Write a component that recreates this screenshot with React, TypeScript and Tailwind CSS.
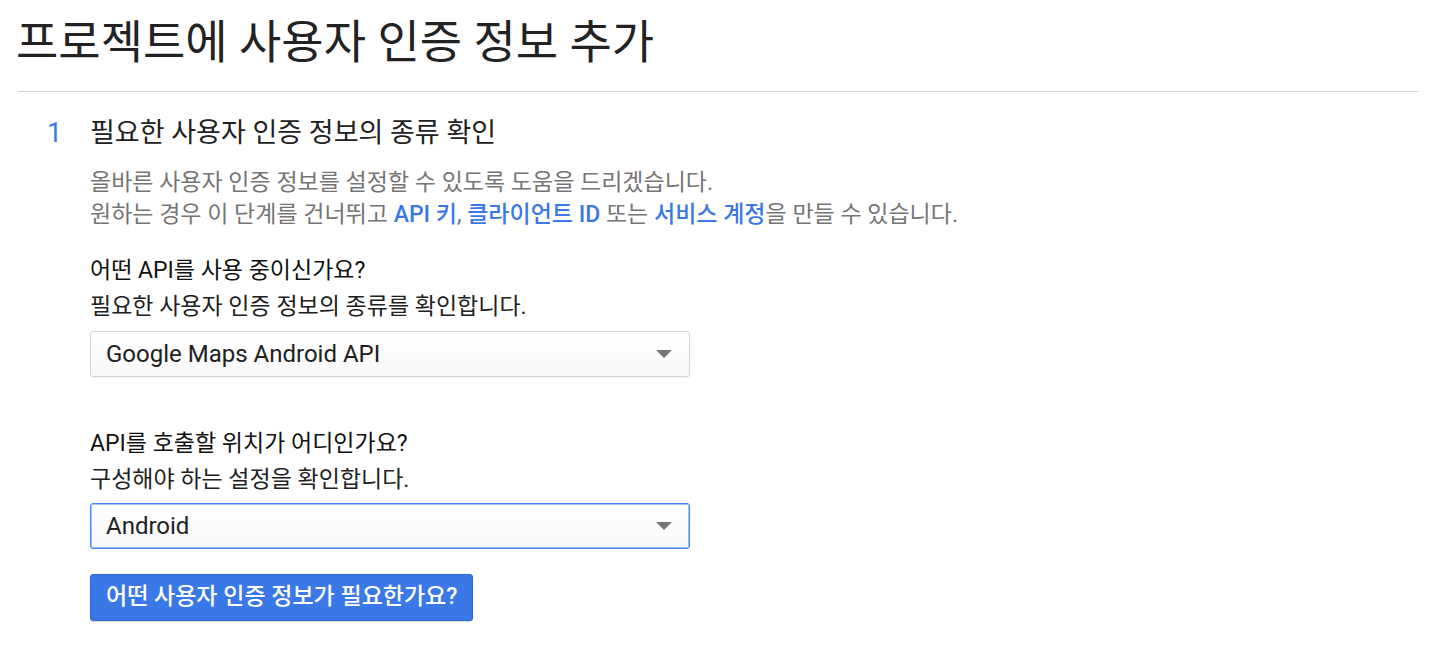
import React from "react";

const font = { fontFamily: 'Roboto, "Noto Sans CJK KR", sans-serif' };

function Select({ value, focused }: { value: string; focused?: boolean }) {
  return (
    <div
      className={
        "flex h-[46px] w-[600px] items-center justify-between rounded-[3px] border bg-gradient-to-b from-white to-[#f8f8f8] pl-[15px] pr-[17px] text-[24px] text-[#212121] " +
        (focused ? "border-[#4285f4] shadow-[0_0_0_1px_rgba(66,133,244,0.5)_inset]" : "border-[#d4d4d4] shadow-[0_1px_1px_rgba(0,0,0,0.06)]")
      }
    >
      <span>{value}</span>
      <svg width="16" height="8" viewBox="0 0 16 8">
        <path d="M0 0h16L8 8z" fill="#757575" />
      </svg>
    </div>
  );
}

export default function App() {
  return (
    <div className="min-h-screen w-full bg-white text-[#212121]" style={font}>
      <h1 className="pl-[16px] pt-[14px] text-[46px] leading-[56px] font-normal text-[#222]">
        프로젝트에 사용자 인증 정보 추가
      </h1>

      <div className="ml-[18px] mr-[20px] mt-[21px] border-t border-[#d4d4d4]" />

      <div className="mt-[25px] flex">
        <div className="w-[90px] pl-[47px] text-[27px] leading-[32px] text-[#3b78e7]">1</div>
        <div className="flex flex-col">
          <h2 className="text-[27px] leading-[32px] font-normal text-[#212121]">
            필요한 사용자 인증 정보의 종류 확인
          </h2>

          <p className="mt-[18px] text-[23px] leading-[32px] text-[#757575]">
            올바른 사용자 인증 정보를 설정할 수 있도록 도움을 드리겠습니다.
            <br />
            원하는 경우 이 단계를 건너뛰고{" "}
            <a className="font-medium text-[#3b78e7]">API 키</a>,{" "}
            <a className="font-medium text-[#3b78e7]">클라이언트 ID</a> 또는{" "}
            <a className="font-medium text-[#3b78e7]">서비스 계정</a>을 만들 수 있습니다.
          </p>

          <div className="mt-[26px] text-[23px] leading-[28px] text-[#111]">
            어떤 API를 사용 중이신가요?
          </div>
          <div className="mt-[8px] text-[23px] leading-[28px] text-[#212121]">
            필요한 사용자 인증 정보의 종류를 확인합니다.
          </div>
          <div className="mt-[10px]">
            <Select value="Google Maps Android API" />
          </div>

          <div className="mt-[53px] text-[23px] leading-[28px] text-[#111]">
            API를 호출할 위치가 어디인가요?
          </div>
          <div className="mt-[8px] text-[23px] leading-[28px] text-[#212121]">
            구성해야 하는 설정을 확인합니다.
          </div>
          <div className="mt-[9px]">
            <Select value="Android" focused />
          </div>

          <div className="mt-[25px]">
            <button className="h-[47px] rounded-[3px] border border-[#2f68d3] bg-[#3b78e7] px-[15px] text-[23px] font-medium text-white shadow-[0_1px_1px_rgba(0,0,0,0.15)]">
              어떤 사용자 인증 정보가 필요한가요?
            </button>
          </div>
        </div>
      </div>
    </div>
  );
}
